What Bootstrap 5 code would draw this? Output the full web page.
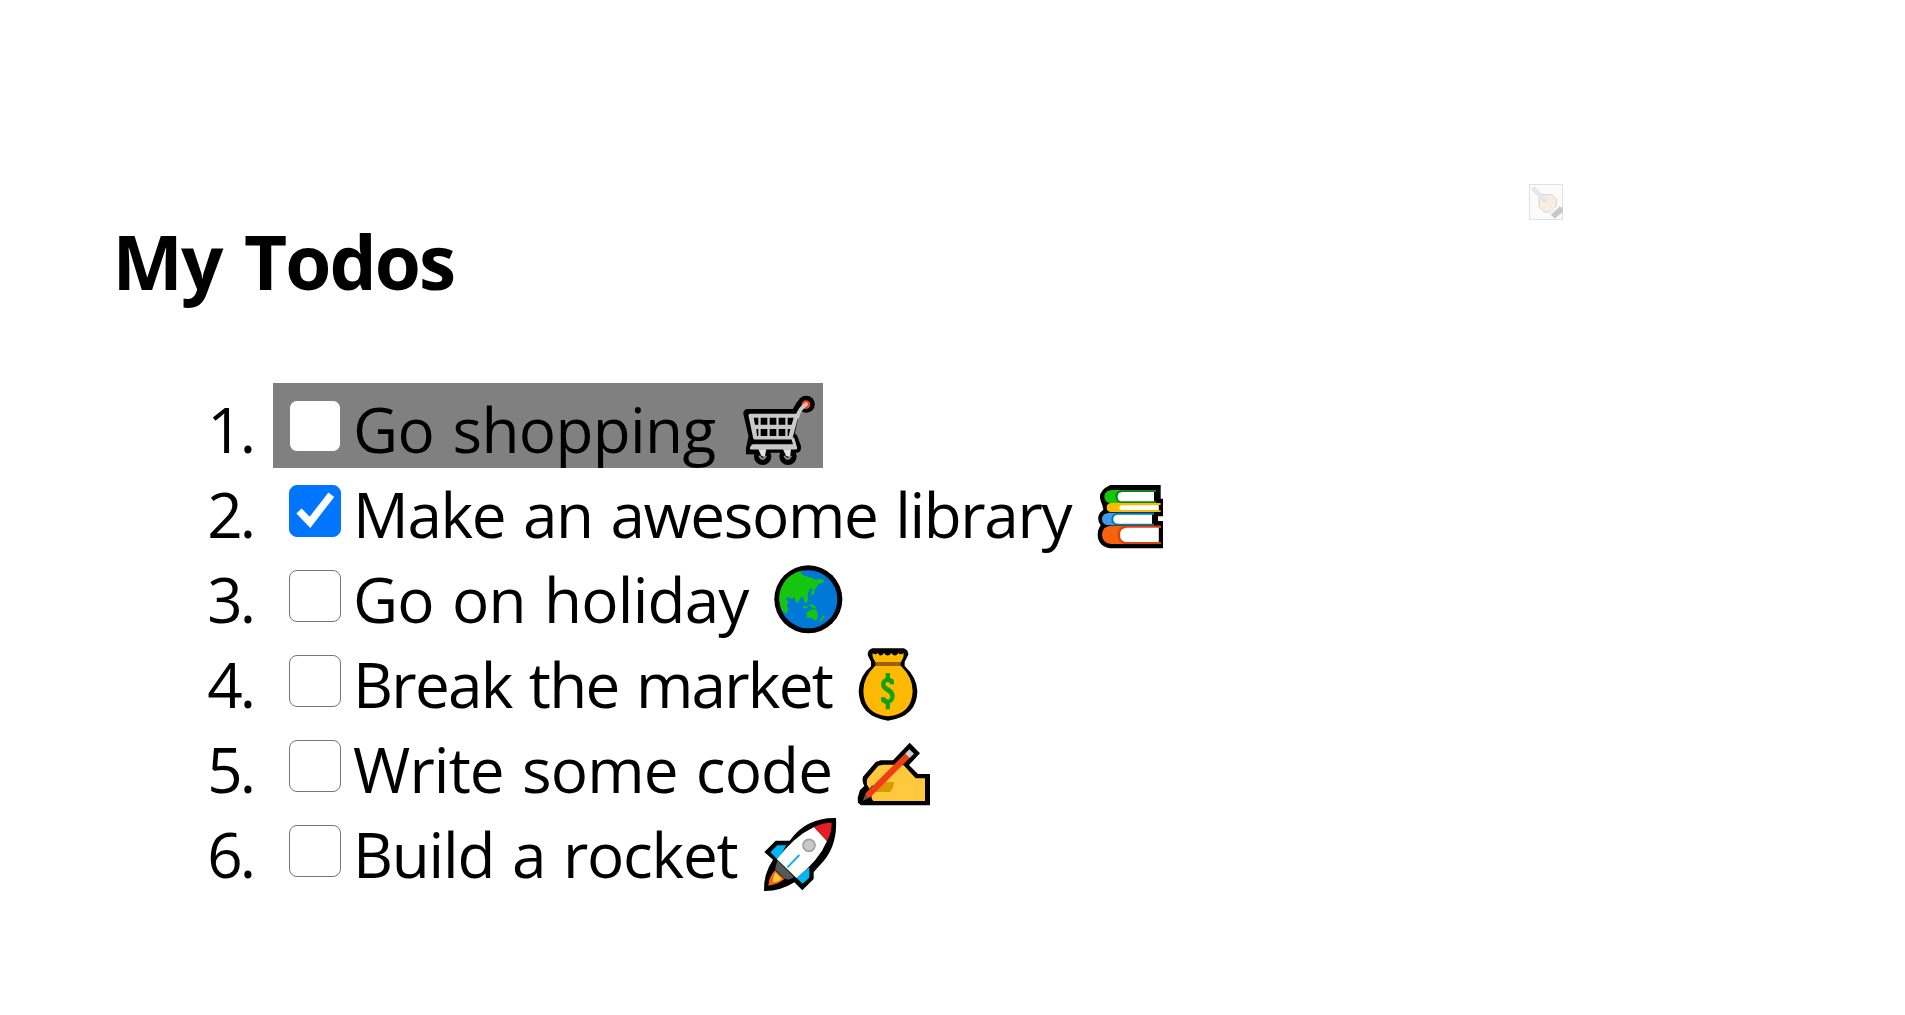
<!DOCTYPE html>
<html lang="en">
<head>
<meta charset="utf-8">
<title>My Todos</title>
<link href="https://cdn.jsdelivr.net/npm/bootstrap@5.3.0/dist/css/bootstrap.min.css" rel="stylesheet">
<style>
body{font-family:"Open Sans","Noto Sans",sans-serif;color:#000;background:#fff;overflow:hidden}
.page-area{padding:184px 0 0 115px}
.tool-chip{width:34px;height:36px;margin-left:1414px}
.todo-title{font-size:74.6px;font-weight:700;line-height:100px;letter-spacing:-1.9px;word-spacing:5px;margin:-9px 0 72px -2.5px;white-space:nowrap}
.todo-row{height:85px;font-size:62px;line-height:93px;white-space:nowrap}
.todo-num{width:138px;text-align:right;margin-right:20px;flex:none;letter-spacing:-3px}
.todo-body{padding-left:16px}
.todo-on{background:gray}
.todo-check{width:52px;height:52px;margin:17px 12px 0 0!important;border:1px solid #767676!important;border-radius:8px!important;float:none!important;flex:none}
.todo-on .todo-check{border-color:#808080!important}
.todo-check:checked{background:#0075ff url("data:image/svg+xml,%3Csvg xmlns='http://www.w3.org/2000/svg' viewBox='0 0 156 156'%3E%3Cpath d='M30 79L63 113L127 30' transform='translate(0 -1)' fill='none' stroke='%23fff' stroke-width='22'/%3E%3C/svg%3E") center/52px 52px!important;border-color:#0075ff!important}
.todo-text{flex:none;word-spacing:3px}
.w1{width:377px;letter-spacing:-.65px}.w2{width:732px;letter-spacing:-1.35px}.w3{width:412px;letter-spacing:-.8px}.w4,.w5{width:497px}.w4{letter-spacing:-1.75px}.w5{letter-spacing:-.87px}.w6{width:402px;letter-spacing:-1.25px}
.emo{display:block;flex:none;overflow:visible;width:90px;height:85px}
.emo-wide{width:93px}
</style>
<script src="https://cdn.jsdelivr.net/npm/bootstrap@5.3.0/dist/js/bootstrap.bundle.min.js"></script>
</head>
<body>
<main class="page-area">
<svg class="tool-chip d-block" viewBox="0 0 102 108"><rect x="1.5" y="1.5" width="99" height="105" fill="#fbfbfb" stroke="#e0e0e0" stroke-width="3"/><path d="M30 32H68L82 45V65L65 84H47L30 68Z" fill="#f9ece1" stroke="#d3d4d4" stroke-width="3"/><path d="M11 12L52 51" stroke="#d5dce2" stroke-width="12"/><path d="M12 13L50 49" stroke="#e8f0f7" stroke-width="6"/><path d="M65 91L91 67L101 72V84L77 104Z" fill="#c8c8c8"/><path d="M66 86L88 67" stroke="#f5f5f5" stroke-width="8"/></svg>
<h1 class="todo-title">My Todos</h1>
<div class="d-flex flex-column align-items-start">
<div class="todo-row d-flex"><span class="todo-num">1.</span><div class="todo-body todo-on d-flex"><input class="form-check-input todo-check" type="checkbox" aria-label="Go shopping"><span class="todo-text w1">Go shopping</span>
<svg class="emo emo-wide" viewBox="0 -6 279 255"><g stroke-linejoin="round" stroke-linecap="round"><path d="M53 85H196L212 58L228 59M53 85L70 158H188M61 192V194M61 190H200M68 158L61 190M190 158L200 185M98 194V214M172 194V214" fill="none" stroke="#000" stroke-width="26"/><path d="M48 190H75V208H48Z"/><path d="M228 58H229" stroke="#000" stroke-width="51"/><circle cx="98" cy="214" r="26"/><circle cx="174" cy="214" r="26"/><path d="M52 80H204L185 172H68Z" stroke="#000" stroke-width="8"/><circle cx="228" cy="59" r="13" fill="#f7410c"/><path d="M60 91L74 159H183L201 91Z" fill="#c9c9c9" stroke="#c9c9c9" stroke-width="9"/><path d="M202 95Q209 70 228 58" fill="none" stroke="#c9c9c9" stroke-width="12"/><path d="M189 162L197 189H64L69 182H192" fill="none" stroke="#c9c9c9" stroke-width="9"/></g><path d="M71 98H85V119H75ZM92 98H112V119H92ZM119 98H139V119H119ZM146 98H166V119H146ZM173 98H191L185 119H173ZM79 132H85V153H81ZM92 132H112V153H92ZM119 132H139V153H119ZM146 132H166V153H146ZM173 132H181L176 153H173Z"/><path d="M78 171H180" stroke="#000" stroke-width="10"/><path d="M85 193H109L104 217L94 212ZM159 193H183L180 217L168 212Z" fill="#e3e3e6"/><path d="M88 212Q98 231 108 212M163 212Q173 231 183 212" fill="none" stroke="#888" stroke-width="6"/></svg></div></div>
<div class="todo-row d-flex"><span class="todo-num">2.</span><div class="todo-body d-flex"><input class="form-check-input todo-check" type="checkbox" checked aria-label="Make an awesome library"><span class="todo-text w2">Make an awesome library</span>
<svg class="emo" viewBox="0 -21 270 255"><path d="M76 30H227V71H234V124H219V138H234V220H76Q39 214 38 180Q38 163 47 151Q33 132 45 113L55 104L52 91L48 80Q35 49 76 30Z"/><path d="M213 45H80Q58 47 58 65Q59 82 76 84H213Z" fill="#16c60c"/><path d="M213 45H108Q91 50 91 65Q92 80 108 84H213V79H207V51H213Z" fill="#0b8614"/><path d="M207 51H112Q98 52 98 65Q98 79 112 79H207Z" fill="#fff"/><path d="M227 84H77Q65 86 65 98Q65 110 78 111H227V106H221V90H227Z" fill="#ffb900"/><path d="M221 91H110Q103 92 103 98Q103 105 110 105H221Z" fill="#fff"/><path d="M207 113H74Q51 115 51 131Q51 150 74 151H207Z" fill="#419bea"/><path d="M207 113H96Q79 117 79 132Q79 149 96 151H207V146H201V119H207Z" fill="#0078b8"/><path d="M201 119H98Q85 120 85 132Q85 146 98 146H201Z" fill="#fff"/><path d="M227 152H79Q51 154 51 179Q51 204 79 207H227V201H221V159H227Z" fill="#f7630c"/><path d="M227 152H117Q98 157 98 179Q98 202 117 207H227V201H221V159H227Z" fill="#d94313"/><path d="M221 158H125Q105 160 105 179Q105 200 125 201H221Z" fill="#fff"/><path d="M207 51H214V79H207ZM201 119H208V146H201Z"/></svg></div></div>
<div class="todo-row d-flex"><span class="todo-num">3.</span><div class="todo-body d-flex"><input class="form-check-input todo-check" type="checkbox" aria-label="Go on holiday"><span class="todo-text w3">Go on holiday</span>
<svg class="emo" viewBox="0 -6 270 255"><circle cx="130" cy="133" r="102"/><circle cx="130" cy="133" r="87" fill="#0078d7"/><path d="M46 154Q38 119 50 96Q61 69 85 57Q106 45 119 48L103 52L118 62L139 68L153 74L166 71L177 76L174 84L160 87L154 99L147 105L139 99L132 105L128 121L129 134L124 145L119 143L115 128L109 125L98 145L93 142L87 127L79 131L68 126L63 132L71 141L65 151L70 163L67 173L59 174Q49 166 46 154Z" fill="#16c60c"/><path d="M124 172L133 168L139 162L149 164L153 161L158 176V188L151 198L143 190L133 188L124 190L127 180ZM111 149L117 154H127L131 149L127 159L116 160ZM131 132L138 138L135 141ZM133 147L144 149L155 158L150 161L135 154ZM142 102L150 108L148 116L137 123L139 115ZM173 180L178 184L173 193L165 202L162 199L170 190Z" fill="#16c60c"/></svg></div></div>
<div class="todo-row d-flex"><span class="todo-num">4.</span><div class="todo-body d-flex"><input class="form-check-input todo-check" type="checkbox" aria-label="Break the market"><span class="todo-text w4">Break the market</span>
<svg class="emo" viewBox="0 -6 270 255"><path d="M67 25H161Q175 29 175 44L164 65V78Q201 113 202 153Q201 230 114 242Q29 230 26 154Q28 107 63 79V65L53 45Q53 29 67 25Z"/><path d="M68 39Q75 47 84 39Q91 54 102 39Q113 54 124 39Q135 54 145 39Q153 47 160 39Q164 47 153 66H76Q65 50 68 39ZM75 78H153Q188 112 188 153Q186 222 114 229Q41 222 40 153Q40 112 75 78Z" fill="#ffb900"/><path d="M76 66H152V78H76Z" fill="#9a6014"/><path d="M107 99H120V114Q131 116 132 123V133H120Q119 125 112 126Q104 129 107 136L127 150Q137 162 133 176Q129 187 120 190V208H107V192Q95 189 93 181V172H106Q108 181 117 178Q125 171 117 161L98 147Q89 134 96 123Q100 116 107 114Z" fill="#13a10e"/></svg></div></div>
<div class="todo-row d-flex"><span class="todo-num">5.</span><div class="todo-body d-flex"><input class="form-check-input todo-check" type="checkbox" aria-label="Write some code"><span class="todo-text w5">Write some code</span>
<svg class="emo" viewBox="0 -21 270 255"><path d="M179 38L210 70L177 105L204 132H240V226H33L24 218L23 203L30 180L43 168Q35 153 39 140L77 96L92 91H129Z"/><path d="M161 106L197 145H225V213H70Q60 203 67 190L51 164Q48 153 53 145L85 107L100 104H125L163 106Z" fill="#ffc83d"/><path d="M101 156H132Q132 174 119 186H72Z" fill="#d99a00"/><path d="M69 190L41 210L36 213L45 193L68 165" fill="#000"/><path d="M165 71L179 84L61 202L40 211L48 188Z" fill="#ef3e16"/><path d="M46 193L56 204L39 212Z" fill="#555"/><path d="M178 58L192 71L179 84L165 71Z" fill="#cecece"/></svg></div></div>
<div class="todo-row d-flex"><span class="todo-num">6.</span><div class="todo-body d-flex"><input class="form-check-input todo-check" type="checkbox" aria-label="Build a rocket"><span class="todo-text w6">Build a rocket</span>
<svg class="emo" viewBox="0 -6 270 255"><path d="M243 24Q248 103 206 153L176 186V207L142 241L118 217Q76 244 27 243Q25 192 54 149L28 126L62 92H104Q154 22 243 24Z"/><path d="M46 127L67 106H94L69 150ZM163 172V203L143 221L124 203Z" fill="#00b7f5"/><path d="M66 148Q116 80 177 51L216 93Q192 151 124 204Z" fill="#fff"/><path d="M177 51Q202 38 230 38Q231 66 216 93Z" fill="#e81c23"/><path d="M60 181L88 207Q68 224 40 227Q41 202 60 181Z" fill="#f7630c"/><path d="M61 187L80 207Q68 217 53 217Q53 203 61 187Z" fill="#ffc83d"/><path d="M67 151L117 202L100 209L89 206L60 178Z" fill="#555958"/><path d="M97 172L133 135" stroke="#18aeea" stroke-width="6"/><circle cx="162" cy="106" r="18" fill="#c8c8c8" stroke="#a1a1a1" stroke-width="5"/></svg></div></div>
</div>
</main>
</body>
</html>
